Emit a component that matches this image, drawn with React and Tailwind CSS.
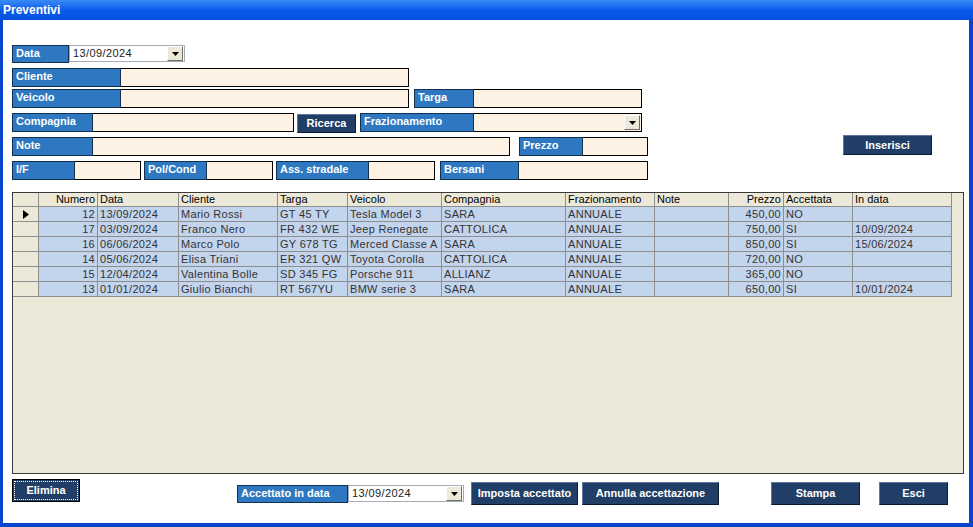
import React from "react";

const font = { fontFamily: '"Liberation Sans", Arial, sans-serif' };

function Label({ w, children }) {
  return (
    <div
      className={`h-full shrink-0 bg-[#2d78c0] border border-[#14304f] text-white font-bold text-[11px] leading-[13px] pl-[3px] pt-[1px] whitespace-nowrap overflow-hidden`}
      style={{ width: w }}
    >
      {children}
    </div>
  );
}

function Input({ w, dropdown }) {
  return (
    <div
      className="h-full shrink-0 bg-[#fdf2e4] border border-black border-l-0 flex justify-end items-center pr-[1px]"
      style={{ width: w }}
    >
      {dropdown && <DropBtn />}
    </div>
  );
}

function DropBtn() {
  return (
    <div className="w-[16px] h-[15px] bg-[#ece9d8] border border-t-white border-l-white border-r-[#716f64] border-b-[#716f64] flex items-center justify-center">
      <svg width="7" height="4" viewBox="0 0 7 4">
        <path d="M0 0H7L3.5 4Z" fill="#000" />
      </svg>
    </div>
  );
}

function DateBox({ w }) {
  return (
    <div
      className="h-[17px] shrink-0 bg-white border border-[#a5acb5] flex items-center justify-between pl-[3px] pr-[1px]"
      style={{ width: w }}
    >
      <span className="text-[11px] text-[#222] tracking-[0.4px]">13/09/2024</span>
      <DropBtn />
    </div>
  );
}

function Btn({ w, h = 20, children, className = "" }) {
  return (
    <div
      className={`shrink-0 bg-[#213e66] border border-t-[#5b7aa3] border-l-[#5b7aa3] border-r-[#0c1a2e] border-b-[#0c1a2e] text-white font-bold text-[11px] flex items-center justify-center whitespace-nowrap ${className}`}
      style={{ width: w, height: h }}
    >
      {children}
    </div>
  );
}

const cols = [
  { w: 26, t: "", r: false },
  { w: 59, t: "Numero", r: true },
  { w: 81, t: "Data" },
  { w: 99, t: "Cliente" },
  { w: 70, t: "Targa" },
  { w: 94, t: "Veicolo" },
  { w: 124, t: "Compagnia" },
  { w: 89, t: "Frazionamento" },
  { w: 74, t: "Note" },
  { w: 55, t: "Prezzo", r: true },
  { w: 69, t: "Accettata" },
  { w: 99, t: "In data" },
];

const rows = [
  ["12", "13/09/2024", "Mario Rossi", "GT 45 TY", "Tesla Model 3", "SARA", "ANNUALE", "", "450,00", "NO", ""],
  ["17", "03/09/2024", "Franco Nero", "FR 432 WE", "Jeep Renegate", "CATTOLICA", "ANNUALE", "", "750,00", "SI", "10/09/2024"],
  ["16", "06/06/2024", "Marco Polo", "GY 678 TG", "Merced Classe A", "SARA", "ANNUALE", "", "850,00", "SI", "15/06/2024"],
  ["14", "05/06/2024", "Elisa Triani", "ER 321 QW", "Toyota Corolla", "CATTOLICA", "ANNUALE", "", "720,00", "NO", ""],
  ["15", "12/04/2024", "Valentina Bolle", "SD 345 FG", "Porsche 911", "ALLIANZ", "ANNUALE", "", "365,00", "NO", ""],
  ["13", "01/01/2024", "Giulio Bianchi", "RT 567YU", "BMW serie 3", "SARA", "ANNUALE", "", "650,00", "SI", "10/01/2024"],
];

function Grid() {
  return (
    <div className="mt-[12px] w-[952px] h-[282px] bg-[#ece9d8] border border-[#3a3a3a] overflow-hidden">
      <div className="flex h-[14px]">
        {cols.map((c, i) => (
          <div
            key={i}
            className={`shrink-0 h-full bg-[#ece9d8] border-r border-b border-[#8e8e8e] text-[11px] leading-[13px] text-black px-[2px] whitespace-nowrap overflow-hidden ${c.r ? "text-right" : ""}`}
            style={{ width: c.w }}
          >
            {c.t}
          </div>
        ))}
      </div>
      {rows.map((r, ri) => (
        <div key={ri} className="flex h-[15px]">
          <div className="shrink-0 w-[26px] h-full bg-[#ece9d8] border-r border-b border-[#8e8e8e] flex items-center justify-center">
            {ri === 0 && (
              <svg width="6" height="9" viewBox="0 0 6 9">
                <path d="M0 0L6 4.5L0 9Z" fill="#000" />
              </svg>
            )}
          </div>
          {r.map((v, ci) => {
            const c = cols[ci + 1];
            return (
              <div
                key={ci}
                className={`shrink-0 h-full bg-[#c3d4ed] border-r border-b border-[#8e8e8e] text-[11px] leading-[14px] text-[#333] tracking-[0.3px] px-[2px] whitespace-nowrap overflow-hidden ${c.r ? "text-right" : ""}`}
                style={{ width: c.w }}
              >
                {v}
              </div>
            );
          })}
        </div>
      ))}
    </div>
  );
}

export default function App() {
  return (
    <div className="w-[973px] h-[527px] bg-[#0846d0] flex flex-col overflow-hidden" style={font}>
      <div className="h-[20px] shrink-0 bg-gradient-to-b from-[#3b8af7] via-[#0a5cec] to-[#0550dd] flex items-center pl-[3px]">
        <span className="text-white font-bold text-[12px] leading-none">Preventivi</span>
      </div>
      <div className="flex-1 bg-white ml-[3px] mr-[4px] mb-[4px] pl-[9px] pt-[25px] flex flex-col">
        <div className="flex h-[18px]">
          <Label w={57}>Data</Label>
          <DateBox w={116} />
        </div>
        <div className="flex h-[19px] mt-[5px]">
          <Label w={109}>Cliente</Label>
          <Input w={288} />
        </div>
        <div className="flex h-[19px] mt-[2px]">
          <Label w={109}>Veicolo</Label>
          <Input w={288} />
          <div className="w-[5px]" />
          <Label w={60}>Targa</Label>
          <Input w={168} />
        </div>
        <div className="flex h-[19px] mt-[5px] items-start">
          <Label w={81}>Compagnia</Label>
          <Input w={201} />
          <Btn w={59} h={19} className="ml-[3px] mt-[1px]">Ricerca</Btn>
          <div className="w-[4px]" />
          <Label w={114}>Frazionamento</Label>
          <Input w={168} dropdown />
        </div>
        <div className="flex h-[19px] mt-[5px] items-start">
          <Label w={81}>Note</Label>
          <Input w={417} />
          <div className="w-[9px]" />
          <Label w={64}>Prezzo</Label>
          <Input w={65} />
          <Btn w={89} h={20} className="ml-[195px] -mt-[2px]">Inserisci</Btn>
        </div>
        <div className="flex h-[19px] mt-[5px]">
          <Label w={63}>I/F</Label>
          <Input w={66} />
          <div className="w-[3px]" />
          <Label w={63}>Pol/Cond</Label>
          <Input w={66} />
          <div className="w-[3px]" />
          <Label w={93}>Ass. stradale</Label>
          <Input w={66} />
          <div className="w-[5px]" />
          <Label w={79}>Bersani</Label>
          <Input w={129} />
        </div>
        <Grid />
        <div className="flex items-start mt-[5px]">
          <div className="w-[68px] h-[23px] shrink-0 bg-[#213e66] border border-black p-[1px]">
            <div className="w-full h-full border border-dotted border-white text-white font-bold text-[11px] flex items-center justify-center">
              Elimina
            </div>
          </div>
          <div className="flex h-[18px] ml-[157px] mt-[6px]">
            <Label w={111}>Accettato in data</Label>
            <DateBox w={116} />
          </div>
          <Btn w={107} h={23} className="ml-[7px] mt-[3px]">Imposta accettato</Btn>
          <Btn w={137} h={23} className="ml-[4px] mt-[3px]">Annulla accettazione</Btn>
          <Btn w={89} h={23} className="ml-[52px] mt-[3px]">Stampa</Btn>
          <Btn w={69} h={23} className="ml-[19px] mt-[3px]">Esci</Btn>
        </div>
      </div>
    </div>
  );
}
